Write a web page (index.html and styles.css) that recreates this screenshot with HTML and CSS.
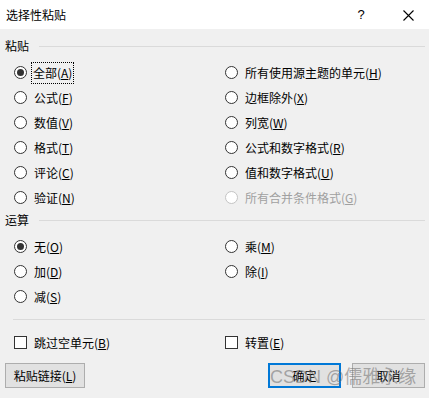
FILE: index.html
```html
<!DOCTYPE html>
<html lang="zh-CN">
<head>
<meta charset="utf-8">
<link rel="stylesheet" href="styles.css">
</head>
<body>
<div class="dialog">
  <div class="titlebar">
    <span class="title">选择性粘贴</span>
    <span class="help">?</span>
    <span class="close">
      <svg width="11" height="11" viewBox="0 0 11 11"><path d="M0.5 0.5 L10.5 10.5 M10.5 0.5 L0.5 10.5" stroke="#000" stroke-width="1.1" fill="none"/></svg>
    </span>
  </div>
  <div class="body">
    <div class="group-header"><span class="group-label">粘贴</span><span class="rule"></span></div>
    <div class="grid six">
      <div class="opt"><span class="radio checked"></span><span class="lbl focus">全部(<u>A</u>)</span></div>
      <div class="opt"><span class="radio"></span><span class="lbl">所有使用源主题的单元(<u>H</u>)</span></div>
      <div class="opt"><span class="radio"></span><span class="lbl">公式(<u>F</u>)</span></div>
      <div class="opt"><span class="radio"></span><span class="lbl">边框除外(<u>X</u>)</span></div>
      <div class="opt"><span class="radio"></span><span class="lbl">数值(<u>V</u>)</span></div>
      <div class="opt"><span class="radio"></span><span class="lbl">列宽(<u>W</u>)</span></div>
      <div class="opt"><span class="radio"></span><span class="lbl">格式(<u>T</u>)</span></div>
      <div class="opt"><span class="radio"></span><span class="lbl">公式和数字格式(<u>R</u>)</span></div>
      <div class="opt"><span class="radio"></span><span class="lbl">评论(<u>C</u>)</span></div>
      <div class="opt"><span class="radio"></span><span class="lbl">值和数字格式(<u>U</u>)</span></div>
      <div class="opt"><span class="radio"></span><span class="lbl">验证(<u>N</u>)</span></div>
      <div class="opt disabled"><span class="radio"></span><span class="lbl">所有合并条件格式(<u>G</u>)</span></div>
    </div>
    <div class="group-header second"><span class="group-label">运算</span><span class="rule"></span></div>
    <div class="grid">
      <div class="opt"><span class="radio checked"></span><span class="lbl">无(<u>O</u>)</span></div>
      <div class="opt"><span class="radio"></span><span class="lbl">乘(<u>M</u>)</span></div>
      <div class="opt"><span class="radio"></span><span class="lbl">加(<u>D</u>)</span></div>
      <div class="opt"><span class="radio"></span><span class="lbl">除(<u>I</u>)</span></div>
      <div class="opt"><span class="radio"></span><span class="lbl">减(<u>S</u>)</span></div>
    </div>
    <div class="sep"></div>
    <div class="grid checks">
      <div class="opt"><span class="check"></span><span class="lbl">跳过空单元(<u>B</u>)</span></div>
      <div class="opt"><span class="check"></span><span class="lbl">转置(<u>E</u>)</span></div>
    </div>
    <div class="footer">
      <button class="btn wide">粘贴链接(<u>L</u>)</button>
      <div class="right">
        <button class="btn default">确定</button>
        <button class="btn">取消</button>
      </div>
      <span class="watermark">CSDN @儒雅永缘</span>
    </div>
  </div>
</div>
</body>
</html>
```

FILE: styles.css
```css
* { box-sizing: border-box; }
html, body {
  margin: 0;
  padding: 0;
}
body {
  width: 429px;
  height: 398px;
  overflow: hidden;
  background: #f0f0f0;
  font-family: "Noto Sans CJK SC", "Noto Sans", sans-serif;
  font-size: 12px;
  color: #000;
}
.dialog {
  width: 429px;
  height: 398px;
  display: flex;
  flex-direction: column;
}
.titlebar {
  height: 29px;
  background: #fff;
  display: flex;
  align-items: center;
  padding-left: 6px;
}
.title {
  flex: 1;
  font-size: 12px;
  line-height: 16px;
}
.help {
  width: 12px;
  font-family: "Liberation Sans", sans-serif;
  font-size: 13px;
  margin-right: 36px;
  text-align: center;
}
.close {
  width: 11px;
  height: 11px;
  display: flex;
  margin-right: 15px;
  margin-top: 1px;
}
.body {
  flex: 1;
  position: relative;
}
.group-header {
  display: flex;
  align-items: center;
  height: 16px;
  margin-top: 9px;
  padding-left: 5px;
  padding-right: 4px;
}
.group-header.second {
  margin-top: 2px;
}
.group-label {
  line-height: 16px;
}
.rule {
  flex: 1;
  height: 1px;
  background: #dadada;
  margin-left: 10px;
}
.grid {
  display: grid;
  grid-template-columns: 211px 1fr;
  grid-auto-rows: 25px;
  padding-left: 14px;
  margin-top: 6px;
}
.opt {
  display: flex;
  align-items: center;
}
.radio {
  width: 13px;
  height: 13px;
  border: 1px solid #333;
  border-radius: 50%;
  background: #fff;
  flex: none;
  display: flex;
  align-items: center;
  justify-content: center;
}
.radio.checked::after {
  content: "";
  width: 7px;
  height: 7px;
  border-radius: 50%;
  background: #333;
}
.lbl {
  margin-left: 6px;
  line-height: 18px;
  padding: 0 1px;
  white-space: nowrap;
}
.lbl u {
  text-underline-offset: 1px;
}
.focus {
  outline: 1px dotted #000;
  outline-offset: 0;
  line-height: 20px;
  padding: 0 1px;
  margin-left: 5px;
}
.disabled .lbl { color: #a0a0a0; }
.disabled .radio { border-color: #c4c4c4; }
.sep {
  height: 1px;
  background: #dadada;
  margin: 10px 4px 0 13px;
}
.checks {
  margin-top: 10px;
  grid-template-columns: 211px 1fr;
}
.check {
  width: 13px;
  height: 13px;
  border: 1px solid #333;
  background: #fff;
  flex: none;
}
.footer {
  margin-top: 8px;
  display: flex;
  justify-content: space-between;
  padding: 0 4px 0 5px;
  position: relative;
}
.right {
  display: flex;
  gap: 11px;
}
.btn {
  height: 25px;
  width: 73px;
  background: #e1e1e1;
  border: 1px solid #adadad;
  font-family: "Noto Sans CJK SC", "Noto Sans", sans-serif;
  font-size: 12px;
  color: #000;
  padding: 0;
  margin: 0;
  line-height: 18px;
}
.btn.wide { width: 80px; }
.btn.default {
  border: 2px solid #0078d7;
}
.watermark {
  position: absolute;
  left: 270px;
  top: 4px;
  font-family: "Liberation Sans", "Noto Sans CJK SC", sans-serif;
  font-size: 18px;
  line-height: 20px;
  color: rgba(110, 110, 110, 0.55);
  white-space: nowrap;
  pointer-events: none;
}
```
